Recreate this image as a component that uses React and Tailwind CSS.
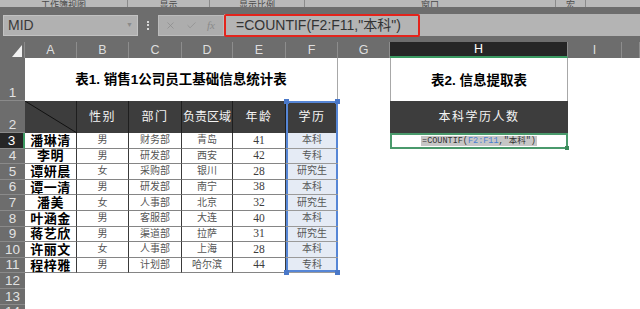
import React from 'react';
import { X, Check } from 'lucide-react';

const colW = ['w-[52px]', 'w-[52px]', 'w-[53px]', 'w-[51px]', 'w-[53px]', 'w-[52px]', 'w-[52px]', 'w-[178px]', 'w-[54px]', 'w-[18px]'];
const letters = ['A', 'B', 'C', 'D', 'E', 'F', 'G', 'H', 'I', ''];

const people = [
  ['潘琳清', '男', '财务部', '青岛', '41', '本科'],
  ['李明', '男', '研发部', '西安', '42', '专科'],
  ['谭妍晨', '女', '采购部', '银川', '28', '研究生'],
  ['谭一清', '男', '研发部', '南宁', '38', '本科'],
  ['潘美', '女', '人事部', '北京', '32', '研究生'],
  ['叶涵金', '男', '客服部', '大连', '40', '本科'],
  ['蒋艺欣', '男', '渠道部', '拉萨', '31', '研究生'],
  ['许丽文', '女', '人事部', '上海', '28', '本科'],
  ['程梓雅', '男', '计划部', '哈尔滨', '44', '专科'],
];

const ui = "font-['Liberation_Sans','Noto_Sans_CJK_SC',sans-serif]";
const cjk = "font-['Liberation_Serif','Noto_Sans_CJK_SC',serif]";

const RowHead = ({ n, h, active }) => (
  <div
    className={`${h} w-[25px] shrink-0 flex items-end justify-center border-b border-[#8a8a8a] text-[13.5px] leading-[15px] ${ui} ${
      active ? 'bg-[#262626] text-white border-r-2 border-r-[#3b9a62]' : 'bg-[#6d6d6d] text-[#e2e2e2]'
    }`}
  >
    {n}
  </div>
);

const Handle = ({ pos }) => <span className={`absolute w-[5px] h-[5px] bg-[#4a78c8] ${pos}`}></span>;

const App = () => {
  return (
    <div className={`w-[640px] h-[309px] overflow-hidden bg-[#6d6d6d] flex flex-col ${ui}`}>
      {/* ribbon group labels, cut off at the top */}
      <div className="h-[7px] shrink-0 bg-[#b9b9b9] flex items-end overflow-hidden text-[9px] leading-[10px] text-[#4a4a4a]">
        <div className="w-[128px] h-full border-r border-[#8a8a8a] flex items-end justify-center">
          <span className="-mb-[3px]">工作簿视图</span>
        </div>
        <div className="w-[82px] h-full border-r border-[#8a8a8a] flex items-end justify-center">
          <span className="-mb-[3px]">显示</span>
        </div>
        <div className="w-[95px] h-full border-r border-[#8a8a8a] flex items-end justify-center">
          <span className="-mb-[3px]">显示比例</span>
        </div>
        <div className="w-[251px] h-full border-r border-[#8a8a8a] flex items-end justify-center">
          <span className="-mb-[3px]">窗口</span>
        </div>
        <div className="w-[30px] h-full border-r border-[#8a8a8a] flex items-end justify-center">
          <span className="-mb-[3px]">宏</span>
        </div>
        <div className="flex-1"></div>
      </div>

      {/* formula bar */}
      <div className="h-[22px] shrink-0 mt-[7px] flex">
        <div className="ml-[3px] mt-[1px] w-[135px] h-[21px] bg-[#b1b1b1] border border-[#c2c2c2] flex items-center justify-between px-[4px]">
          <span className="text-[14px] text-[#3a3a3a]">MID</span>
          <span className="text-[7px] text-[#8a8a8a]">▼</span>
        </div>
        <div className="w-[20px] flex flex-col items-center justify-center gap-[1.5px]">
          <span className="w-[2px] h-[2px] bg-[#d6d6d6]"></span>
          <span className="w-[2px] h-[2px] bg-[#d6d6d6]"></span>
          <span className="w-[2px] h-[2px] bg-[#d6d6d6]"></span>
        </div>
        <div className="mt-[1px] w-[66px] h-[21px] bg-[#adadad] border border-[#bcbcbc] flex items-center gap-[10px] pl-[6px] text-[#8a8a8a]">
          <X size={11} strokeWidth={1.5} />
          <Check size={11} strokeWidth={1.5} />
          <span className="font-['Liberation_Serif',serif] italic text-[11px]">fx</span>
        </div>
        <div className="flex-1 bg-[#b4b4b4] flex">
          <div className="w-[196px] h-[23px] border-2 border-[#e3241c] rounded-[2px] flex items-center pl-[10px] text-[14px] text-[#333]">
            =COUNTIF(F2:F11,"本科")
          </div>
        </div>
      </div>

      {/* column headers */}
      <div className="mt-[6px] h-[16px] shrink-0 flex text-[12.5px] text-[#dedede]">
        <div className="w-[25px] shrink-0 relative border-r border-[#8a8a8a]">
          <span className="absolute right-[2px] bottom-[1px] w-0 h-0 border-l-[10px] border-l-transparent border-b-[12px] border-b-[#f2f2f2]"></span>
        </div>
        {letters.map((l, i) => (
          <div
            key={i}
            className={`${colW[i]} shrink-0 flex items-center justify-center border-r border-[#8d8d8d] ${
              l === 'H' ? 'bg-[#262626] text-white border-b-2 border-b-[#3b9a62]' : ''
            }`}
          >
            {l}
          </div>
        ))}
      </div>

      {/* sheet */}
      <div className="flex-1 min-h-0 overflow-hidden bg-white flex flex-col">
        {/* row 1 */}
        <div className="flex h-[43px] shrink-0">
          <RowHead n="1" h="h-[43px]" />
          <div className="w-[313px] border-r border-[#a8a8a8] flex items-center justify-center font-bold text-[13.5px] text-black pt-[2px]">
            表1. 销售1公司员工基础信息统计表
          </div>
          <div className="w-[52px]"></div>
          <div className="w-[178px] border-x border-[#a8a8a8] flex items-center justify-center font-bold text-[13.5px] text-black pt-[3px]">
            表2. 信息提取表
          </div>
        </div>

        {/* row 2 */}
        <div className="flex h-[32px] shrink-0">
          <RowHead n="2" h="h-[32px]" />
          <div className="w-[52px] bg-[#3d3d3d] border-r border-[#1e1e1e]">
            <svg width="52" height="32" viewBox="0 0 52 32">
              <line x1="0" y1="0" x2="52" y2="32" stroke="#111" strokeWidth="1" />
            </svg>
          </div>
          {['性别', '部门', '负责区域', '年龄'].map((t, i) => (
            <div
              key={t}
              className={`${colW[i + 1]} bg-[#3d3d3d] border-r border-[#1e1e1e] flex items-center justify-center whitespace-nowrap text-[12px] text-[#f4f4f4] ${
                t.length > 2 ? 'tracking-[0px]' : 'tracking-[1.5px]'
              } ${cjk}`}
            >
              {t}
            </div>
          ))}
          <div className="w-[52px] relative bg-[#3d3d3d] shadow-[inset_2px_0_0_#5686d6,inset_-2px_0_0_#5686d6,inset_0_2px_0_#5686d6] flex items-center justify-center text-[12px] tracking-[1.5px] text-[#f4f4f4]">
            学历
            <Handle pos="-left-[2px] -top-[2px]" />
            <Handle pos="-right-[2px] -top-[2px]" />
          </div>
          <div className="w-[52px] bg-white"></div>
          <div className="w-[178px] bg-[#3d3d3d] flex items-center justify-center text-[12px] tracking-[1.5px] text-[#f4f4f4]">
            本科学历人数
          </div>
        </div>

        {/* rows 3-11 */}
        {people.map((p, r) => (
          <div key={r} className="flex h-[15.6px] shrink-0">
            <RowHead n={r + 3} h="h-[15.6px]" active={r === 0} />
            <div className="w-[52px] border-r border-b border-r-[#3a3a3a] border-b-[#858585] flex items-center justify-center font-bold text-[13px] tracking-[0.5px] leading-none text-black">
              {p[0]}
            </div>
            {p.slice(1, 5).map((v, i) => (
              <div
                key={i}
                className={`${colW[i + 1]} border-r border-b border-r-[#3a3a3a] border-b-[#858585] flex items-center justify-center ${cjk} leading-none ${
                  i === 3 ? 'text-[11.5px] text-[#3c3c3c]' : 'text-[10px] text-[#555]'
                }`}
              >
                {v}
              </div>
            ))}
            <div
              className={`w-[52px] relative bg-[#e5ebf5] border-b border-b-[#9a9a9a] flex items-center justify-center text-[10px] leading-none text-[#555] ${
                r === people.length - 1
                  ? 'shadow-[inset_2px_0_0_#5686d6,inset_-2px_0_0_#5686d6,inset_0_-2px_0_#5686d6]'
                  : 'shadow-[inset_2px_0_0_#5686d6,inset_-2px_0_0_#5686d6]'
              }`}
            >
              {p[5]}
              {r === people.length - 1 && (
                <>
                  <Handle pos="-left-[2px] -bottom-[3px]" />
                  <Handle pos="-right-[2px] -bottom-[3px]" />
                </>
              )}
            </div>
            <div className="w-[52px]"></div>
            {r === 0 ? (
              <div className="w-[178px] relative border-2 border-[#4a9a6c] flex items-center justify-center">
                <span className="bg-[#c6c6c6] font-['Liberation_Mono','Noto_Sans_CJK_SC',monospace] text-[8.5px] leading-[10px] text-[#333] px-[1px]">
                  =COUNTIF(<span className="text-[#4a7fd0]">F2:F11</span>,"本科")
                </span>
                <span className="absolute -right-[3px] -bottom-[3px] w-[4px] h-[4px] bg-[#3a8a5a]"></span>
              </div>
            ) : null}
          </div>
        ))}

        {/* empty rows */}
        {[12, 13, 14].map((n) => (
          <div key={n} className="flex h-[15.6px] shrink-0">
            <RowHead n={n} h="h-[15.6px]" />
          </div>
        ))}
      </div>
    </div>
  );
};

export default App;
